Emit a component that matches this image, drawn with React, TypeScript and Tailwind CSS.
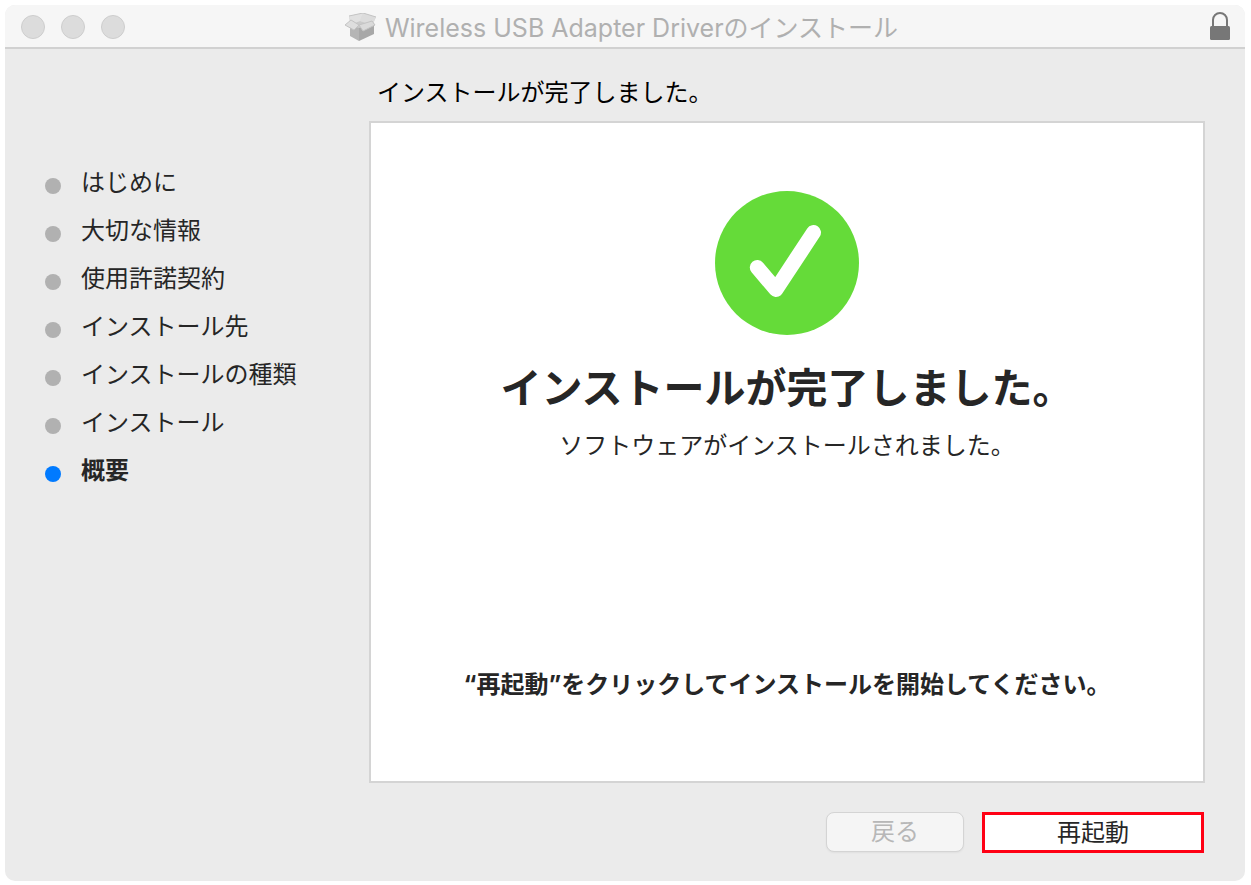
const steps = [
  { label: "はじめに" },
  { label: "大切な情報" },
  { label: "使用許諾契約" },
  { label: "インストール先" },
  { label: "インストールの種類" },
  { label: "インストール" },
  { label: "概要", current: true },
];

function PackageIcon() {
  return (
    <svg width="32" height="28" viewBox="0 0 32 28" aria-hidden="true">
      {/* inside of the box */}
      <path d="M5 11 L4 3 L18 0 L31 4 L27 13 L14 17 Z" fill="#d6d6d6" />
      <path d="M7 11 L15 8 L27 12 L14 16 Z" fill="#cacaca" />
      <path d="M15 8 L18 0 L31 4 L27 12 Z" fill="#dcdcdc" />
      <path d="M7 11 L4 3 L18 0 L15 8 Z" fill="#e1e1e1" />
      <path d="M4 3 L18 0 L31 4" fill="none" stroke="#c4c4c4" />
      {/* outer walls */}
      <path d="M5 12 L14 15 V28 L5 23 Z" fill="#b5b5b5" />
      <path d="M14 15 L29 10 V21 L14 28 Z" fill="#a8a8a8" />
      {/* front flaps */}
      <path d="M6 7 L0 12 L9 17 L14 12 Z" fill="#dedede" stroke="#c3c3c3" />
      <path d="M14 12 L27 8 L30 12 L18 18 Z" fill="#dadada" stroke="#c3c3c3" />
    </svg>
  );
}

function LockIcon() {
  return (
    <svg width="20" height="30" viewBox="0 0 20 30" aria-hidden="true">
      <path
        d="M3 15 V8 A7 7 0 0 1 17 8 V15"
        fill="none"
        stroke="#777777"
        strokeWidth="2"
      />
      <rect y="14" width="20" height="14" rx="1.5" fill="#777777" />
    </svg>
  );
}

function CheckIcon() {
  return (
    <svg width="144" height="144" viewBox="0 0 144 144" aria-hidden="true">
      <circle cx="72" cy="72" r="72" fill="#65db39" />
      <path
        d="M42.3 76.5 L61 98.5 L98.5 41.5"
        fill="none"
        stroke="#ffffff"
        strokeWidth="15"
        strokeLinecap="round"
        strokeLinejoin="round"
      />
    </svg>
  );
}

function TitleBar() {
  return (
    <header className="flex h-11 items-center border-b-2 border-[#d1d1d1] bg-[#f6f6f6] pt-[2px] pr-[15px] pl-4">
      <div className="flex gap-4">
        <button
          aria-label="閉じる"
          className="size-6 rounded-full border border-[#cdcdcd] bg-[#dcdcdc]"
        />
        <button
          aria-label="しまう"
          className="size-6 rounded-full border border-[#cdcdcd] bg-[#dcdcdc]"
        />
        <button
          aria-label="拡大"
          className="size-6 rounded-full border border-[#cdcdcd] bg-[#dcdcdc]"
        />
      </div>
      <div className="flex flex-1 items-center justify-center gap-2 pr-[92px]">
        <PackageIcon />
        <h1 className="pt-[2px] text-[25px] leading-8 whitespace-nowrap text-[#b0b0b0]">
          Wireless USB Adapter Driverのインストール
        </h1>
      </div>
      <LockIcon />
    </header>
  );
}

export default function App() {
  return (
    <div className="flex min-h-screen bg-white px-[6px] pt-[5px] pb-1 pl-[5px] font-['Inter','Noto_Sans_CJK_JP',sans-serif] text-2xl text-[#262626]">
      <div className="flex flex-1 flex-col overflow-hidden rounded-[10px] bg-[#ebebeb]">
        <TitleBar />
        <div className="flex flex-1 pr-10 pb-7">
          <nav className="w-[364px] shrink-0 pt-[110px] pl-10">
            <ol>
              {steps.map((step) => (
                <li key={step.label} className="flex h-12 items-center gap-5">
                  <span
                    className={
                      step.current
                        ? "mt-[6px] size-4 rounded-full bg-[#007aff]"
                        : "mt-[6px] size-4 rounded-full bg-[#b1b1b1]"
                    }
                  />
                  <span className={step.current ? "font-bold" : ""}>
                    {step.label}
                  </span>
                </li>
              ))}
            </ol>
          </nav>
          <main className="flex flex-1 flex-col">
            <p className="pt-7 pb-3 pl-2 leading-8 text-black">
              インストールが完了しました。
            </p>
            <section className="flex flex-1 flex-col items-center border-2 border-[#d4d4d4] bg-white pt-[68px] pb-20">
              <CheckIcon />
              <h2 className="mt-[25px] text-[41px] leading-[56px] font-bold">
                インストールが完了しました。
              </h2>
              <p className="mt-[14px] leading-8">
                ソフトウェアがインストールされました。
              </p>
              <p className="mt-auto leading-8 font-bold">
                “再起動”をクリックしてインストールを開始してください。
              </p>
            </section>
            <footer className="mt-[29px] flex justify-end gap-[18px] pr-px">
              <button
                disabled
                className="h-10 w-[138px] rounded-lg border border-[#d4d4d4] bg-[#f5f5f5] leading-8 text-[#b7b7b7] shadow-xs"
              >
                戻る
              </button>
              <button className="h-[41px] w-[222px] border-3 border-[#ff0014] bg-white leading-8">
                再起動
              </button>
            </footer>
          </main>
        </div>
      </div>
    </div>
  );
}
